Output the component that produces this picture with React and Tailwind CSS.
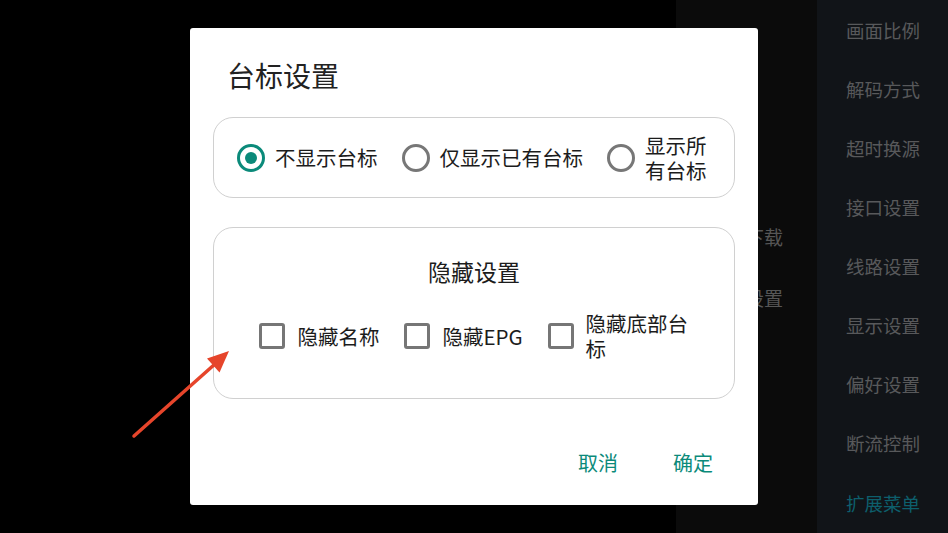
import { useState } from "react";

const font = { fontFamily: '"Noto Sans CJK SC", "Noto Sans", sans-serif' };

const sideItems = [
    "画面比例",
    "解码方式",
    "超时换源",
    "接口设置",
    "线路设置",
    "显示设置",
    "偏好设置",
    "断流控制",
    "扩展菜单",
];

const Radio = ({ checked, label, labelClass = "", onClick }) => (
    <div className="flex items-center gap-[10px] cursor-pointer" onClick={onClick}>
        <div
            className={
                checked
                    ? "w-[28px] h-[28px] shrink-0 rounded-full border-[3.5px] border-[#0b8a7a] flex items-center justify-center"
                    : "w-[28px] h-[28px] shrink-0 rounded-full border-[3.5px] border-[#777777]"
            }
        >
            {checked && <div className="w-[12px] h-[12px] rounded-full bg-[#0b8a7a]" />}
        </div>
        <span className={"text-[20.5px] leading-[25px] text-[#1c1c1c] " + labelClass}>{label}</span>
    </div>
);

const Check = ({ checked, label, labelClass = "", onClick }) => (
    <div className="flex items-center gap-[12px] cursor-pointer" onClick={onClick}>
        <div className="w-[26px] h-[26px] shrink-0 rounded-[3px] border-[3px] border-[#767676] flex items-center justify-center">
            {checked && <div className="w-[12px] h-[12px] bg-[#0b8a7a]" />}
        </div>
        <span className={"text-[20.5px] leading-[25px] text-[#1c1c1c] " + labelClass}>{label}</span>
    </div>
);

export default function App() {
    const [mode, setMode] = useState(0);
    const [hidden, setHidden] = useState([false, false, false]);

    const toggle = (i) => setHidden(hidden.map((v, j) => (j === i ? !v : v)));

    return (
        <div className="relative w-full h-[533px] flex overflow-hidden bg-black" style={font}>
            {/* background screens */}
            <div className="flex-1 bg-black" />
            <div className="w-[141px] bg-[#0b0b0b] flex flex-col items-end pr-[34px] pt-[224px] gap-[35px]">
                <span className="text-[19px] leading-[26px] text-[#565656]">台标下载</span>
                <span className="text-[19px] leading-[26px] text-[#565656]">台标设置</span>
            </div>
            <div className="w-[131px] bg-[#111418] flex flex-col pt-[1px] pl-[29px]">
                {sideItems.map((item, i) => (
                    <div
                        key={item}
                        className={
                            i === sideItems.length - 1
                                ? "h-[59.2px] flex items-center text-[18.5px] text-[#0d5f6c]"
                                : "h-[59.2px] flex items-center text-[18.5px] text-[#58595b]"
                        }
                    >
                        {item}
                    </div>
                ))}
            </div>

            {/* dialog */}
            <div className="absolute inset-0 flex items-center justify-center">
                <div className="w-[568px] h-[477px] bg-white rounded-[3px] flex flex-col px-[23px] pt-[30px]">
                    <div className="pl-[14px] text-[28px] leading-[34px] text-[#222222]">台标设置</div>

                    <div className="mt-[25px] h-[81px] rounded-[20px] border-[1.5px] border-[#d0d0d0] flex items-center justify-center gap-[24px] pr-[4px]">
                        <Radio checked={mode === 0} label="不显示台标" onClick={() => setMode(0)} />
                        <Radio checked={mode === 1} label="仅显示已有台标" onClick={() => setMode(1)} />
                        <Radio
                            checked={mode === 2}
                            label="显示所有台标"
                            labelClass="w-[62px]"
                            onClick={() => setMode(2)}
                        />
                    </div>

                    <div className="mt-[29px] h-[172px] rounded-[20px] border-[1.5px] border-[#d0d0d0] flex flex-col items-center pt-[28px]">
                        <div className="text-[23px] leading-[30px] text-[#1c1c1c]">隐藏设置</div>
                        <div className="mt-[25px] flex items-center gap-[25px]">
                            <Check checked={hidden[0]} label="隐藏名称" onClick={() => toggle(0)} />
                            <Check checked={hidden[1]} label="隐藏EPG" onClick={() => toggle(1)} />
                            <Check
                                checked={hidden[2]}
                                label="隐藏底部台标"
                                labelClass="w-[103px]"
                                onClick={() => toggle(2)}
                            />
                        </div>
                    </div>

                    <div className="mt-[50px] flex justify-end gap-[55px] pr-[22px]">
                        <button className="text-[20px] leading-[28px] text-[#0b8a7a]">取消</button>
                        <button className="text-[20px] leading-[28px] text-[#0b8a7a]">确定</button>
                    </div>
                </div>
            </div>

            {/* annotation arrow */}
            <svg
                className="absolute inset-0 pointer-events-none"
                width="948"
                height="533"
                viewBox="0 0 948 533"
            >
                <line x1="134" y1="436" x2="215" y2="364" stroke="#e6452b" strokeWidth="3.5" strokeLinecap="round" />
                <polygon points="229,351 219.5,372.5 207,358.5" fill="#e6452b" />
            </svg>
        </div>
    );
}
